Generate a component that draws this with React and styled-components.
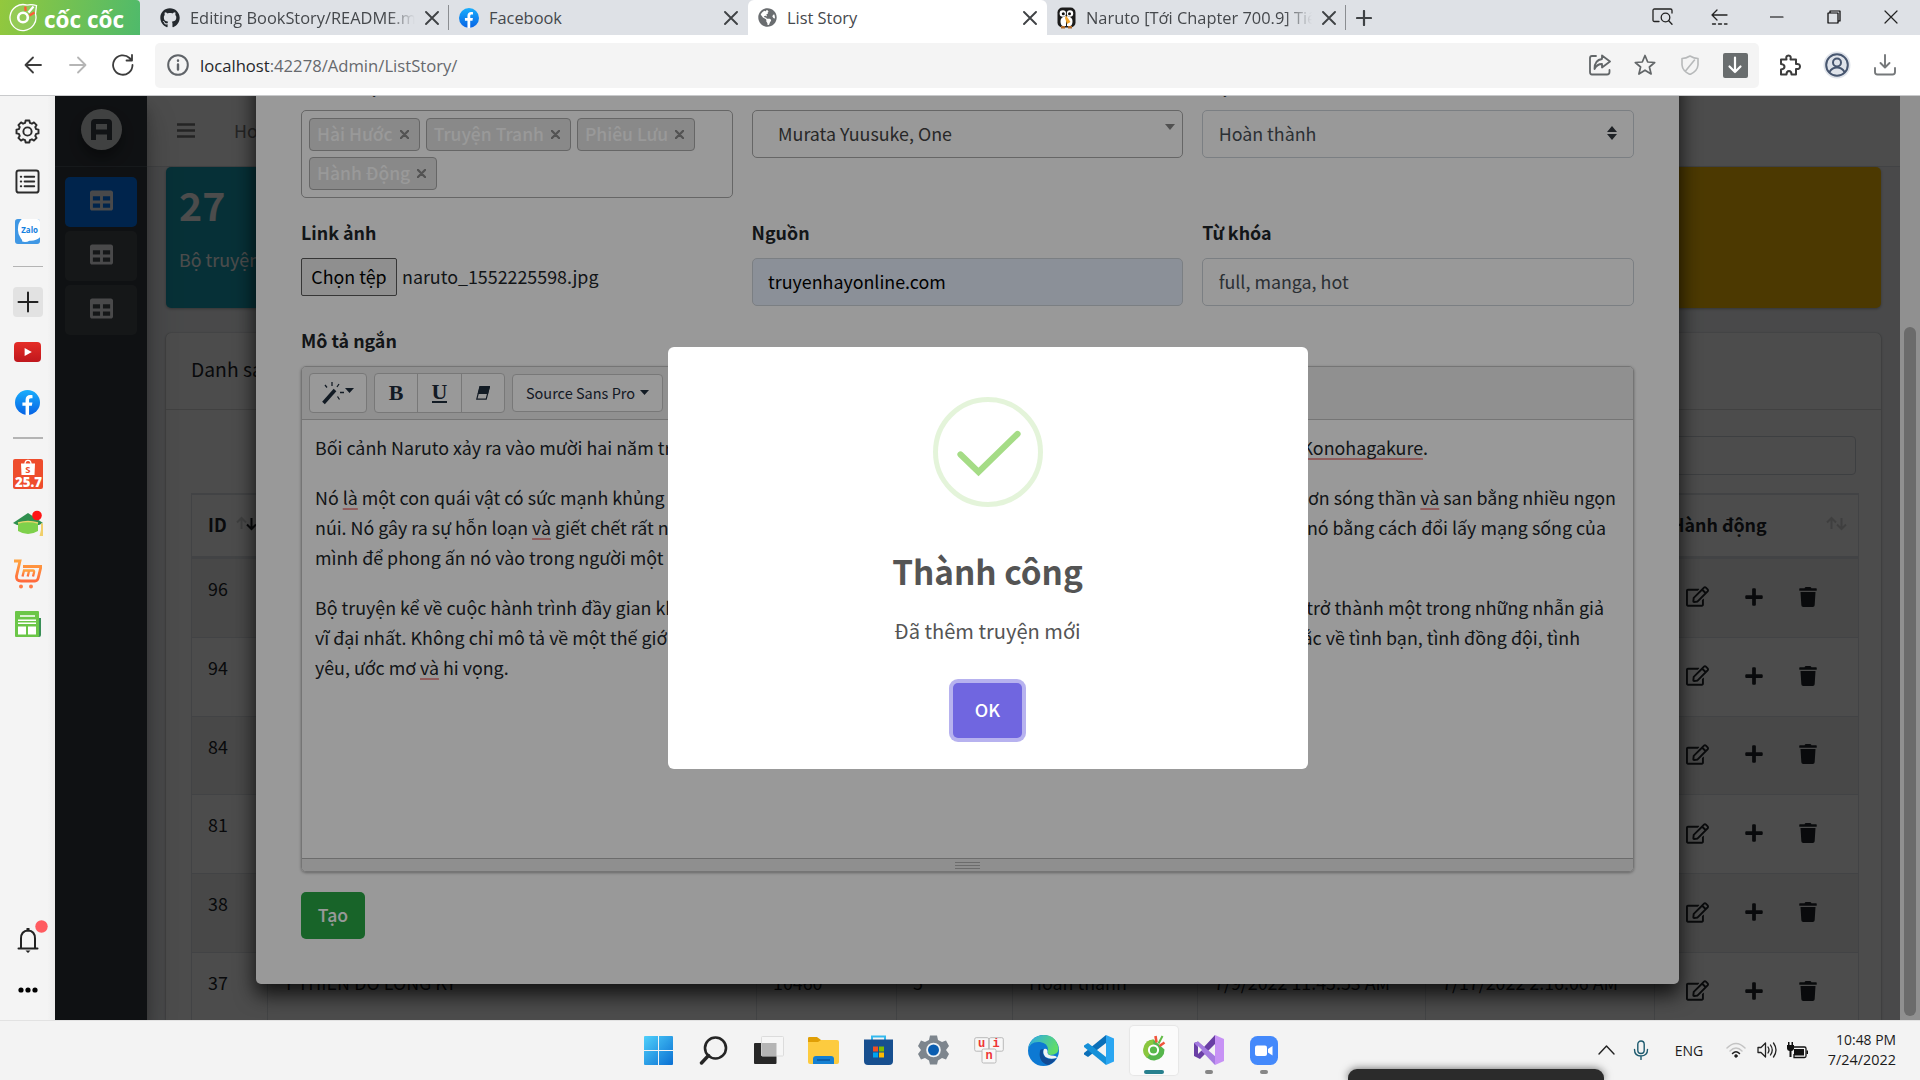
import React from 'react';
import styled, { createGlobalStyle, css } from 'styled-components';
import { FaTable, FaRegEdit, FaPlus, FaTrash, FaGithub, FaGlobeAmericas } from 'react-icons/fa';

const CONTENT_FONT = '"Noto Sans CJK SC", "Noto Sans", sans-serif';
const UI_FONT = '"Open Sans", "Noto Sans", sans-serif';

const GlobalStyle = createGlobalStyle`
  *, *::before, *::after { box-sizing: border-box; }
  body { margin: 0; overflow: hidden; }
  svg { display: block; flex: none; }
`;

const Screen = styled.div`
  width: 1920px;
  height: 1080px;
  display: flex;
  flex-direction: column;
  overflow: hidden;
  background: #fff;
  font-family: ${UI_FONT};
`;

/* ---------- browser chrome ---------- */
const TabStrip = styled.header`
  height: 35px;
  flex: none;
  display: flex;
  background: #dee1e6;
`;
const Brand = styled.div`
  width: 140px;
  display: flex;
  align-items: center;
  gap: 6px;
  padding-left: 9px;
  margin-right: 10px;
  border-top-right-radius: 4px;
  background: linear-gradient(100deg, #93c83d, #4fba6b);
  color: #fff;
  font-weight: 700;
  font-size: 22.5px;
  line-height: 31px;
  white-space: nowrap;
`;
const BrandName = styled.span`
  padding-top: 3px;
`;
const Tab = styled.div`
  width: 299px;
  display: flex;
  align-items: center;
  padding: 0 10px;
  border-radius: 6px 6px 0 0;
  background: ${p => (p.$active ? '#fff' : 'transparent')};
`;
const TabDivider = styled.i`
  width: 1px;
  height: 25px;
  align-self: center;
  margin-left: -1px;
  background: #8a8d91;
`;
const TabTitle = styled.span`
  flex: 1;
  min-width: 0;
  margin: 0 10px;
  overflow: hidden;
  white-space: nowrap;
  font-size: 16.4px;
  line-height: 35px;
  color: #45484c;
  ${p => p.$fade && css`mask-image: linear-gradient(90deg, #000 88%, transparent 100%);`}
`;
const NewTab = styled.div`
  width: 36px;
  display: flex;
  align-items: center;
  justify-content: center;
`;
const WindowButtons = styled.div`
  margin-left: auto;
  padding-right: 1px;
  display: flex;
`;
const WindowButton = styled.div`
  width: 57px;
  height: 33px;
  display: flex;
  align-items: center;
  justify-content: center;
`;
const Toolbar = styled.div`
  height: 61px;
  flex: none;
  display: flex;
  align-items: center;
  padding: 0 11px;
  border-bottom: 1px solid #c9cacc;
  background: #fff;
`;
const ToolButton = styled.div`
  width: ${p => p.$w}px;
  height: 45px;
  display: flex;
  align-items: center;
  justify-content: center;
`;
const AddressBar = styled.div`
  flex: 1;
  height: 45px;
  margin: 0 8px 0 10px;
  padding: 0 1px 0 12px;
  display: flex;
  align-items: center;
  border-radius: 5px;
  background: #f4f4f4;
`;
const Url = styled.span`
  flex: 1;
  margin-left: 11px;
  font-size: 16.65px;
  color: #66696d;
  b { font-weight: 400; color: #26282b; }
`;
const DownloadBadge = styled.div`
  width: 25px;
  height: 25px;
  border-radius: 2px;
  display: flex;
  align-items: center;
  justify-content: center;
  background: #696d6e;
`;

const Middle = styled.div`
  height: 924px;
  flex: none;
  display: flex;
`;
const BrowserSide = styled.aside`
  width: 55px;
  display: flex;
  flex-direction: column;
  align-items: center;
  padding-top: 10px;
  background: linear-gradient(90deg, #f4f4f4 86%, #ececec);
`;
const SideItem = styled.div`
  height: 50px;
  width: 55px;
  display: flex;
  align-items: center;
  justify-content: center;
  ${p => p.$bottom && css`margin-top: auto;`}
`;
const SideRule = styled.i`
  width: 30px;
  height: ${p => p.$h}px;
  margin: 10px 0;
  background: #b4b4b4;
`;
const AddBox = styled.div`
  width: 30px;
  height: 30px;
  border-radius: 4px;
  display: flex;
  align-items: center;
  justify-content: center;
  background: #e2e2e2;
`;
const MoreItem = styled(SideItem)`
  margin-bottom: 5px;
`;

/* ---------- admin page ---------- */
const Viewport = styled.main`
  width: 1865px;
  height: 924px;
  position: relative;
  display: flex;
  overflow: hidden;
  background: #f4f6f9;
  font-family: ${CONTENT_FONT};
  font-size: 17.85px;
  line-height: 30px;
  color: #212529;
`;
const AdminSide = styled.nav`
  width: 92px;
  z-index: 1;
  display: flex;
  flex-direction: column;
  background: #343a40;
  box-shadow: 0 17px 35px rgba(0,0,0,.25), 0 12px 12px rgba(0,0,0,.22);
`;
const LogoCell = styled.div`
  height: 71px;
  display: flex;
  justify-content: center;
  padding-top: 13px;
  border-bottom: 1px solid #4b545c;
  margin-bottom: 10px;
`;
const LogoDisc = styled.div`
  width: 41px;
  height: 41px;
  border-radius: 50%;
  background: #d9dadb;
  display: flex;
  align-items: center;
  justify-content: center;
  box-shadow: 0 8px 12px rgba(0,0,0,.35);
`;
const NavTile = styled.div`
  height: 50px;
  margin: 0 10px 4px;
  padding-bottom: 3px;
  border-radius: 5px;
  display: flex;
  align-items: center;
  justify-content: center;
  font-size: 23px;
  color: #f4f6f8;
  background: ${p => (p.$active ? '#007bff' : 'rgba(255,255,255,.1)')};
`;
const Content = styled.div`
  width: 1753px;
  display: flex;
  flex-direction: column;
`;
const TopNav = styled.div`
  height: 71px;
  flex: none;
  display: flex;
  align-items: center;
  gap: 39px;
  padding: 0 0 2px 30px;
  border-bottom: 1px solid #dee2e6;
  background: #fff;
  color: #7a7a7a;
`;
const BoxRow = styled.div`
  display: grid;
  grid-template-columns: repeat(4, 1fr);
  gap: 19px;
  height: 141px;
  flex: none;
  margin: 0 19px;
`;
const StatBox = styled.div`
  padding: 10px 13px;
  border-radius: 5px;
  background: ${p => p.$bg};
  color: #fff;
  box-shadow: 0 1px 3px rgba(0,0,0,.3);
`;
const StatNumber = styled.div`
  margin-top: 4px;
  font-size: 39.3px;
  font-weight: 700;
  line-height: 46px;
`;
const StatLabel = styled.div`
  margin-top: 17px;
`;
const ListCard = styled.section`
  flex: 1;
  min-height: 0;
  margin: 25px 19px 0;
  display: flex;
  flex-direction: column;
  border-radius: 5px 5px 0 0;
  background: #fff;
  box-shadow: 0 0 1px rgba(0,0,0,.3), 0 1px 3px rgba(0,0,0,.3);
`;
const CardHead = styled.div`
  height: 77px;
  flex: none;
  padding: 21px 25px;
  font-size: 19.3px;
  border-bottom: 1px solid rgba(0,0,0,.14);
`;
const SearchLine = styled.div`
  display: flex;
  justify-content: flex-end;
  padding: 26px 25px 18px 0;
`;
const SearchInput = styled.div`
  width: 250px;
  height: 39px;
  border: 1px solid #ced4da;
  border-radius: 4px;
`;
const Table = styled.div`
  margin: 0 22px 0 25px;
  border: 1px solid #dee2e6;
  border-top-width: 2px;
  display: flex;
  flex-direction: column;
`;
const TableRow = styled.div`
  display: grid;
  grid-template-columns: 76px 489px 140px 116px 185px 228px 229px 1fr;
  height: ${p => (p.$head ? 64 : 78.8)}px;
  flex: none;
  ${p => p.$head && css`
    font-weight: 700;
    border-bottom: 3px solid #dee2e6;
  `}
  background: ${p => (p.$odd ? 'rgba(0,0,0,.05)' : 'transparent')};
`;
const Cell = styled.div`
  display: flex;
  padding: 14px 10px 0 16px;
  border-right: 1px solid #dee2e6;
  border-bottom: 1px solid #dee2e6;
  white-space: nowrap;
  overflow: hidden;
  &:last-child { border-right: 0; }
`;
const HeadCell = styled(Cell)`
  border-bottom: 0;
  border-right: 0;
  justify-content: space-between;
  padding-right: 11px;
  overflow: visible;
`;
const RowActions = styled(Cell)`
  align-items: center;
  padding: 0 0 2px 31px;
`;
const ActionIcon = styled.span`
  width: ${p => p.$w}px;
`;

/* ---------- form modal ---------- */
const Backdrop = styled.div`
  position: absolute;
  inset: 0 20px 0 0;
  z-index: 2;
  background: rgba(0,0,0,.5);
`;
const FormModal = styled.div`
  position: absolute;
  z-index: 3;
  top: -27px;
  left: 201px;
  width: 1423px;
  height: 915px;
  padding: 0 45px;
  display: flex;
  flex-direction: column;
  border-radius: 5px;
  background: #fff;
  box-shadow: 0 10px 20px 1px rgba(0,0,0,.75);
`;
const FieldGrid = styled.div`
  display: grid;
  grid-template-columns: repeat(3, 1fr);
  gap: 19px 18.75px;
`;
const Label = styled.div`
  height: 30px;
  margin-bottom: 11px;
  font-weight: 700;
`;
const DescriptionLabel = styled(Label)`
  margin-top: 19px;
`;
const Field = styled.div`
  height: 48px;
  display: flex;
  align-items: center;
  justify-content: space-between;
  padding: 0 ${p => p.$pr || 15}px 2px ${p => p.$pl || 15.5}px;
  border: 1px solid ${p => p.$border || '#ced4da'};
  border-radius: 5px;
  background: ${p => p.$bg || '#fff'};
  color: ${p => p.$color || '#495057'};
`;
const TagBox = styled.div`
  height: 88px;
  padding: 7px;
  display: flex;
  flex-wrap: wrap;
  align-content: flex-start;
  gap: 6px;
  border: 1px solid #aaa;
  border-radius: 5px;
`;
const Tag = styled.span`
  height: 33px;
  display: flex;
  align-items: center;
  gap: 7px;
  padding: 0 10px 1px 7px;
  border: 1px solid #aaa;
  border-radius: 4px;
  background: #e4e4e4;
  color: #fff;
  font-weight: 500;
  font-size: 17.5px;
  white-space: nowrap;
`;
const FileLine = styled.div`
  display: flex;
  height: 38px;
  gap: 5px;
  line-height: 36px;
`;
const FileButton = styled.span`
  width: 96px;
  height: 38px;
  text-align: center;
  line-height: 34px;
  border: 1px solid #5a5a5a;
  border-radius: 2px;
  background: #efefef;
  color: #000;
`;
const Editor = styled.div`
  height: 506px;
  flex: none;
  display: flex;
  flex-direction: column;
  border: 1px solid #c4c4c4;
  border-radius: 5px;
  box-shadow: 0 1px 3px rgba(0,0,0,.35);
  overflow: hidden;
`;
const EditorTools = styled.div`
  height: 53px;
  flex: none;
  display: flex;
  align-items: center;
  gap: 7px;
  padding-left: 7px;
  background: #f1f1f1;
  border-bottom: 1px solid #c4c4c4;
`;
const ToolGroup = styled.div`
  display: flex;
  height: ${p => p.$h || 40}px;
  border: 1px solid #c8c8c8;
  border-radius: 4px;
  background: #fff;
  color: #1f2d3d;
`;
const EditorButton = styled.div`
  width: ${p => p.$w}px;
  display: flex;
  align-items: center;
  justify-content: center;
  gap: ${p => (p.$gap === undefined ? 5 : p.$gap)}px;
  padding-bottom: 1px;
  font-size: 14.5px;
  & + & { border-left: 1px solid #c8c8c8; }
`;
const CaretLift = styled.span`
  padding-bottom: 4px;
`;
const Glyph = styled.b`
  font-family: "Liberation Serif", serif;
  font-size: 22px;
  line-height: 22px;
  ${p => p.$under && css`border-bottom: 2px solid #1f2d3d; line-height: 18px;`}
`;
const EditorBody = styled.div`
  flex: 1;
  padding: 12px 13px 0;
`;
const Paragraph = styled.div`
  margin-bottom: 20px;
`;
const Line = styled.div`
  width: ${p => p.$w}px;
  height: 30px;
  display: flex;
  justify-content: space-between;
  white-space: nowrap;
`;
const Misspelt = styled.span`
  text-decoration: underline 2px #f09a9a;
  text-underline-offset: 3px;
  text-decoration-skip-ink: none;
`;
const StatusBar = styled.div`
  height: 13px;
  display: flex;
  flex-direction: column;
  align-items: center;
  justify-content: center;
  gap: 2px;
  border-top: 1px solid #b4b4b4;
  background: #efefef;
`;
const Grip = styled.i`
  width: 25px;
  height: 1px;
  background: #b4b4b4;
`;
const SubmitButton = styled.button`
  width: 64px;
  height: 47px;
  margin-top: 20px;
  padding: 0 0 3px 0;
  border: 0;
  border-radius: 5px;
  background: #28a745;
  color: #fff;
  font: 500 17.6px ${CONTENT_FONT};
`;

/* ---------- alert ---------- */
const Shade = styled.div`
  position: absolute;
  inset: 0;
  z-index: 4;
  background: rgba(0,0,0,.4);
`;
const Alert = styled.div`
  position: absolute;
  z-index: 5;
  left: 613px;
  top: 251px;
  width: 640px;
  height: 422px;
  padding: 50px 1px 0 0;
  display: flex;
  flex-direction: column;
  align-items: center;
  border-radius: 6px;
  background: #fff;
  color: #545454;
`;
const AlertTitle = styled.div`
  margin-top: 37px;
  font-size: 33.3px;
  font-weight: 700;
  line-height: 54px;
`;
const AlertText = styled.div`
  margin-top: 16px;
  font-size: 20.1px;
  line-height: 34px;
`;
const OkButton = styled.button`
  width: 69px;
  height: 55px;
  margin-top: 35px;
  padding: 0 0 3px;
  border: 0;
  border-radius: 5px;
  background: #7066e0;
  box-shadow: 0 0 0 4px rgba(112,102,224,.5);
  color: #fff;
  font: 500 17.85px ${CONTENT_FONT};
`;
const ScrollTrack = styled.div`
  width: 20px;
  padding: 231px 4px 4px;
  background: #f1f1f1;
`;
const ScrollThumb = styled.div`
  height: 100%;
  border-radius: 6px;
  background: #b2b2b2;
`;

/* ---------- taskbar ---------- */
const Taskbar = styled.footer`
  height: 60px;
  flex: none;
  display: flex;
  position: relative;
  padding-right: 24px;
  border-top: 1px solid #e2e2e2;
  background: #f3f3f3;
`;
const Apps = styled.div`
  display: flex;
  margin-left: 631px;
`;
const AppSlot = styled.div`
  width: 55px;
  height: 59px;
  position: relative;
  display: flex;
  align-items: center;
  justify-content: center;
  padding-bottom: 1px;
`;
const ActiveTile = styled.div`
  width: 48px;
  height: 49px;
  padding-bottom: 4px;
  display: flex;
  align-items: center;
  justify-content: center;
  border-radius: 4px;
  background: #fbfbfb;
  box-shadow: 0 0 1px 1px #e6e6e6;
`;
const Running = styled.i`
  position: absolute;
  bottom: 6px;
  width: ${p => (p.$active ? 20 : 8)}px;
  height: 4px;
  border-radius: 2px;
  background: ${p => (p.$active ? '#27808e' : '#868686')};
`;
const Tray = styled.div`
  margin-left: auto;
  padding-bottom: 1px;
  display: flex;
  align-items: center;
  color: #1b1b1b;
`;
const TrayItem = styled.div`
  width: ${p => p.$w}px;
  display: flex;
  justify-content: center;
  font-size: 14px;
`;
const Clock = styled.div`
  width: 84px;
  text-align: right;
  font-size: 14.4px;
  line-height: 20px;
  white-space: nowrap;
`;
const ClockTime = styled.div`
  font-size: 13.9px;
`;
const Preview = styled.div`
  position: absolute;
  left: 1348px;
  bottom: 0;
  width: 256px;
  height: 11px;
  border-radius: 9px 9px 0 0;
  background: #2b2b2b;
  box-shadow: 0 0 9px rgba(0,0,0,.6);
`;

/* ---------- drawings ---------- */
const Stroke = ({ w = 24, h = w, box = `0 0 ${w} ${h}`, c = '#3c3c3c', s = 1.8, children }) => (
  <svg width={w} height={h} viewBox={box} fill="none" stroke={c} strokeWidth={s} strokeLinecap="round" strokeLinejoin="round">{children}</svg>
);
const CloseX = ({ c = '#3f4245', s = 1.9, size = 14 }) => (
  <Stroke w={size} box="0 0 14 14" c={c} s={s}><path d="M1 1 13 13M13 1 1 13" /></Stroke>
);
const CocLogo = () => (
  <svg width="29" height="30" viewBox="0 0 29 30" fill="none">
    <path d="M18 2.200A13 13 0 1 0 26.500 11L27.500 2.500Q22 0.800 18 2.200" stroke="#fff" strokeWidth="1.300" fill="rgba(255,255,255,.1)" />
    <circle cx="14" cy="14.500" r="4.800" stroke="#fff" strokeWidth="2.600" />
    <path d="M16.300 3.500 16.600 8" stroke="#ff5a36" strokeWidth="2.300" />
    <path d="M24.500 3.500 19.500 9.500" stroke="#fff" strokeWidth="2.200" />
    <path d="M25.500 9.500 20.500 12.500" stroke="#ff5a36" strokeWidth="2.300" />
  </svg>
);
const CocSmall = () => (
  <svg width="24" height="30" viewBox="0 0 24 30" fill="none">
    <path d="M11.500 6.500A10.500 10.500 0 1 0 22.500 16.500Z" fill="#56b64c" />
    <path d="M11.500 6.500A10.500 10.500 0 0 0 5 25L11 17Z" fill="#8ac63f" />
    <circle cx="11.500" cy="17" r="4.600" fill="#58b84b" stroke="#fff" strokeWidth="2" />
    <path d="M13.500 3 14.500 9.500" stroke="#f0543c" strokeWidth="2.600" />
    <path d="M20.500 3 16.500 10.500" stroke="#62bb46" strokeWidth="2" />
    <path d="M22.500 9.500 17.500 13" stroke="#f0543c" strokeWidth="2.600" />
  </svg>
);
const FacebookMark = ({ size }) => (
  <svg width={size} height={size} viewBox="0 0 26 26">
    <defs><linearGradient id="fbg" x1="0" y1="0" x2="0" y2="1"><stop offset="0" stopColor="#19aefc" /><stop offset="1" stopColor="#0662e5" /></linearGradient></defs>
    <circle cx="13" cy="13" r="13" fill="url(#fbg)" />
    <path d="M11 26V16.500H7.700V13H11V10.200C11 7 13 5.200 15.800 5.200 17 5.200 18.200 5.400 18.200 5.400V8.500H16.600C15 8.500 14.600 9.400 14.600 10.400V13H18.100L17.500 16.500H14.600V26Z" fill="#fff" />
  </svg>
);
const Penguin = () => (
  <svg width="19" height="22" viewBox="0 0 19 22">
    <rect x=".5" y=".5" width="18" height="20" rx="5" fill="#1b1b1b" />
    <path d="M9 9Q3 10 3.500 15 4 19 6 19H9ZM10 9Q16 10 15.500 15 15 19 13 19H10Z" fill="#fff" />
    <circle cx="5.800" cy="6.500" r="3.200" fill="#fff" /><circle cx="13" cy="6.500" r="3.200" fill="#fff" />
    <circle cx="6.300" cy="6.800" r="1.500" fill="#111" /><circle cx="12.500" cy="6.800" r="1.500" fill="#111" />
    <path d="M9 8.500 13.500 15 10 17 8 11Z" fill="#f0a32c" /><path d="M4 19H8V21.500H4ZM11 19H15V21.500H11Z" fill="#b06a2a" />
  </svg>
);
const GearOutline = () => {
  const n = 8;
  let d = '';
  for (let i = 0; i < n; i += 1) {
    [[-0.27, 9.3], [-0.17, 11.6], [0.17, 11.6], [0.27, 9.3]].forEach(([o, r], k) => {
      const a = (i * 2 * Math.PI) / n + o;
      d += `${i === 0 && k === 0 ? 'M' : 'L'}${(13 + r * Math.sin(a)).toFixed(2)} ${(13 - r * Math.cos(a)).toFixed(2)}`;
    });
  }
  return <Stroke w={25} box="0 0 26 26" c="#2b2b2b" s={2}><path d={`${d}Z`} /><circle cx="13" cy="13" r="4.300" /></Stroke>;
};
const ListOutline = () => (
  <Stroke w={25} box="0 0 26 26" c="#2b2b2b" s={2}>
    <rect x="1.500" y="1.500" width="23" height="23" rx="2.500" />
    <path d="M6 8H6.500M10 8H20M6 13H6.500M10 13H20M6 18H6.500M10 18H20" />
  </Stroke>
);
const Zalo = () => (
  <svg width="25" height="25" viewBox="0 0 26 26">
    <rect width="26" height="26" rx="3" fill="#3f97e4" />
    <path d="M7 0H23Q26 0 26 3V19Q22 23 15 22.500 12 24.500 7.500 23.500 8 22 6 20 3 16 3 11 3 4 7 0Z" fill="#fff" />
    <text x="6.500" y="14.500" fontFamily="Open Sans, sans-serif" fontWeight="700" fontSize="8.300" fill="#1681e0">Zalo</text>
  </svg>
);
const YouTube = () => (
  <svg width="27" height="20" viewBox="0 0 28 20" preserveAspectRatio="none">
    <defs><linearGradient id="yt" x1="0" y1="0" x2="0" y2="1"><stop offset="0" stopColor="#e52d27" /><stop offset="1" stopColor="#bf171d" /></linearGradient></defs>
    <rect width="28" height="20" rx="4" fill="url(#yt)" /><path d="M11 6V14L18.500 10Z" fill="#fff" />
  </svg>
);
const Shopee = () => (
  <svg width="30" height="30" viewBox="0 0 30 30">
    <rect width="30" height="30" rx="2" fill="#ee4d2d" />
    <path d="M8 4.500H22L21.500 16H8.500Z" fill="#fff" /><path d="M12 5Q12 1.300 15 1.300T18 5" stroke="#fff" strokeWidth="1.300" fill="none" />
    <text x="12.200" y="13.700" fontFamily="Open Sans, sans-serif" fontWeight="700" fontSize="9.500" fill="#ee4d2d">S</text>
    <text x="2" y="27.500" fontFamily="Open Sans, sans-serif" fontWeight="800" fontSize="13.500" textLength="27" lengthAdjust="spacingAndGlyphs" fill="#fff">25.7</text>
  </svg>
);
const GradCap = () => (
  <svg width="30" height="28" viewBox="0 0 30 28">
    <path d="M0 13 15 3 30 13 26 15H4Z" fill="#2f8f4e" /><path d="M5 13Q15 10 25 13V21Q15 27 5 21Z" fill="#7ed04b" />
    <path d="M5 13Q15 10 25 13" stroke="#e9d66b" strokeWidth="1.500" fill="none" /><path d="M28 13V20L26.500 26H30V14Z" fill="#f0cf6a" />
    <circle cx="24" cy="5.500" r="4.800" fill="#ff1616" />
  </svg>
);
const Cart = () => (
  <svg width="28" height="30" viewBox="0 0 28 30" fill="none">
    <defs><linearGradient id="ct" x1="0" y1="0" x2="0" y2="1"><stop offset="0" stopColor="#ffa23f" /><stop offset="1" stopColor="#ff6a3c" /></linearGradient></defs>
    <path d="M0 2H6L2.500 17Q2 22 7 22H21Q23.500 22 24.200 19L27 7.500H9" stroke="url(#ct)" strokeWidth="2.800" />
    <path d="M8.500 17.500 10 11.500H19Q20.500 11.500 20 13.500L19 17.500M15 12 13.700 17.500" stroke="url(#ct)" strokeWidth="2.300" />
    <circle cx="7" cy="27.500" r="2" fill="#ff7a45" /><circle cx="17" cy="27.500" r="2" fill="#ff7a45" />
  </svg>
);
const News = () => (
  <svg width="26" height="26" viewBox="0 0 26 26">
    <path d="M22 7H26V24Q26 26 24 26H20Z" fill="#3a8f58" /><rect width="24" height="26" rx="1" fill="#6bc648" />
    <path d="M5 5H20M3 9.300H21M3 12.300H21" stroke="#fff" strokeWidth="1.500" /><path d="M3 15.500H11V23.500H3ZM13 15.500H21V23.500H13Z" fill="#fff" />
  </svg>
);
const Bell = () => (
  <svg width="40" height="40" viewBox="0 0 40 40" fill="none">
    <path d="M13 27.500V18.500Q13 11 20 10.500 27 11 27 18.500V27.500M10.500 28.500H29.500" stroke="#222" strokeWidth="2" strokeLinecap="round" />
    <path d="M18.500 8H21.500V11H18.500ZM17.500 30.500H22.500L20 33Z" fill="#222" /><circle cx="33.500" cy="6.500" r="6.200" fill="#ff5b60" />
  </svg>
);
const SortArrows = ({ up = '#d3d4d5', down = '#d3d4d5' }) => (
  <svg width="21" height="30" viewBox="0 0 21 30" fill="none" strokeWidth="2">
    <path d="M5.500 20V9.500M1 13.500 5.500 9 10 13.500" stroke={up} /><path d="M15.500 9V19.500M11 15.500 15.500 20 20 15.500" stroke={down} />
  </svg>
);
const Wand = () => (
  <svg width="22" height="24" viewBox="0 0 22 24" fill="none" stroke="#1f2d3d">
    <path d="M1.500 22 13 9" strokeWidth="3.600" /><path d="M10 1V5M3 4 5 6.500M17 3 15 6M18 11.500H22M15.500 15.500 17.500 18.500" strokeWidth="1.300" />
  </svg>
);
const Caret = () => <svg width="9" height="5"><path d="M0 0H9L4.500 5Z" fill="#1f2d3d" /></svg>;
const EraserMark = () => (
  <svg width="14" height="14" viewBox="0 0 14 14"><path d="M4 .5H13.500L10.200 13.200H.8Z" fill="none" stroke="#1f2d3d" strokeWidth="1.200" /><path d="M3.800 0H14L12 8H1.700Z" fill="#1f2d3d" /></svg>
);

/* ---------- taskbar app marks ---------- */
const WindowsMark = () => (
  <svg width="29" height="29" viewBox="0 0 29 29">
    <defs><linearGradient id="wn" x1="0" y1="0" x2="1" y2="1"><stop offset="0" stopColor="#4fd0fb" /><stop offset="1" stopColor="#0a6fd2" /></linearGradient></defs>
    <path d="M0 1Q0 0 1 0H14V14H0ZM15 0H28Q29 0 29 1V14H15ZM0 15H14V29H1Q0 29 0 28ZM15 15H29V28Q29 29 28 29H15Z" fill="url(#wn)" />
  </svg>
);
const SearchMark = () => <Stroke w={29} c="#252525" s={2.600}><circle cx="16.500" cy="12" r="10.500" /><path d="M9.500 19.500 2.500 27" strokeWidth="3.400" /></Stroke>;
const TaskView = () => (
  <svg width="30" height="28" viewBox="0 0 30 28"><rect y="7" width="22.500" height="21" rx="1" fill="#272727" /><rect x="7.500" y=".5" width="22" height="19.500" rx="1" fill="#f6f6f6" stroke="#dcdcdc" /><path d="M7.500 7H22.500V20H8.500Q7.500 20 7.500 19Z" fill="#b5b5b5" /></svg>
);
const Folder = () => (
  <svg width="31" height="28" viewBox="0 0 31 28"><path d="M0 2Q0 1 1.500 1H9L13 4V9H0Z" fill="#e09f06" /><path d="M0 6H10L13 4H29Q31 4 31 6V26Q31 28 29 28H2Q0 28 0 26Z" fill="#fdcb3f" /><path d="M5 28V23Q5 20 8 20H23Q26 20 26 23V28Z" fill="#1580d2" /><path d="M9 24H22" stroke="#0a569c" strokeWidth="1.500" /></svg>
);
const StoreMark = () => (
  <svg width="29" height="30" viewBox="0 0 29 30"><path d="M8 5V1.500H21V5" fill="none" stroke="#34b9ee" strokeWidth="2" /><path d="M0 4.500H29V26Q29 30 25 30H4Q0 30 0 26Z" fill="#174f8f" /><path d="M9 11.500H14V16.500H9Z" fill="#f25022" /><path d="M15 11.500H20V16.500H15Z" fill="#7fba00" /><path d="M9 17.500H14V22.500H9Z" fill="#00a4ef" /><path d="M15 17.500H20V22.500H15Z" fill="#ffb900" /></svg>
);
const GearMark = () => (
  <svg width="31" height="30" viewBox="0 0 31 30">
    <path d="M12 .5H19L20 5 24 7 28 5.500 31 11 28 15 31 19 28 24.500 24 23 20 25.500 19 29.500H12L11 25.500 7 23 3 24.500 0 19 3 15 0 11 3 5.500 7 7 11 5Z" fill="#7d858d" /><circle cx="15.500" cy="15" r="7.300" fill="#eef2f5" /><circle cx="15.500" cy="15" r="5.500" fill="#0a5db0" />
  </svg>
);
const UniKey = () => (
  <svg width="30" height="27" viewBox="0 0 30 27">
    <g fill="#f7f7f7" stroke="#b9b9b9"><rect x=".7" y=".7" width="14" height="13.500" rx="1.500" /><rect x="15.300" y=".7" width="14" height="13.500" rx="1.500" /><rect x="8" y="12" width="14" height="14" rx="1.500" /></g>
    <g fontFamily="Liberation Mono, monospace" fontWeight="700" fontSize="12" fill="#ee3636"><text x="4" y="9.500">u</text><text x="18.500" y="9.500">i</text><text x="11.500" y="22">n</text></g>
  </svg>
);
const EdgeMark = () => (
  <svg width="31" height="31" viewBox="0 0 31 31">
    <defs><linearGradient id="eg" x1="0" y1="0" x2="1" y2=".4"><stop offset="0" stopColor="#2aa8ee" /><stop offset="1" stopColor="#5fdc6a" /></linearGradient></defs>
    <circle cx="15.500" cy="15.500" r="15.500" fill="#0d79d3" />
    <path d="M0 15Q2 6 12 7 20 8 20 15 19 19 22 20 31 20 30.500 13 28 0 15.500 0 2 1 0 15Z" fill="url(#eg)" />
    <path d="M12 16Q10 27 20 30 26 28 28.500 23 22 26 17 22 14 19 15.500 14 12 14 12 16Z" fill="#114a94" /><path d="M16 14Q20 13 19.500 18 20 20 23 20.500 30 20.500 28.500 23 22 25 17.500 22 14 18 16 14Z" fill="#f3f3f3" />
  </svg>
);
const CodeMark = () => (
  <svg width="30" height="30" viewBox="0 0 30 30"><path d="M22 0V8L4 22 0 19.500V18Z" fill="#0b6fb8" /><path d="M22 30V22L4 8 0 10.500V12Z" fill="#1590d8" /><path d="M22 0 30 3.500V26.500L22 30Z" fill="#2aa6f2" /></svg>
);
const StudioMark = () => (
  <svg width="30" height="30" viewBox="0 0 30 30"><path d="M0 8 4 6.500 10 12 21 0 22 8 6 24 0 21Z" fill="#6a3fa5" /><path d="M4 6.500 22 22 21 30 0 8Z" fill="#a57ce0" /><path d="M4 11 8 15 4 19Z" fill="#f3f3f3" /><path d="M21 0 30 4V26L21 30Z" fill="#c792f5" /></svg>
);
const ZoomMark = () => (
  <svg width="28" height="29" viewBox="0 0 28 29"><rect width="28" height="29" rx="7.500" fill="#4489fb" /><rect x="5" y="9.500" width="12" height="10.500" rx="2" fill="#fff" /><path d="M18 13 22.500 10V19.500L18 16.500Z" fill="#fff" /></svg>
);

/* ---------- data ---------- */
const tabs = [
  { title: 'Editing BookStory/README.md', icon: <FaGithub size={20} color="#24292e" />, fade: true, rule: true },
  { title: 'Facebook', icon: <FacebookMark size={20} /> },
  { title: 'List Story', icon: <FaGlobeAmericas size={19} color="#6a6d70" />, active: true },
  { title: 'Naruto [Tới Chapter 700.9] Tiếng', icon: <Penguin />, fade: true, rule: true },
];
const genres = ['Hài Hước', 'Truyện Tranh', 'Phiêu Lưu', 'Hành Động'];
const ids = [96, 94, 84, 81, 38];
const lastRow = ['37', 'Ỷ THIÊN ĐỒ LONG KÝ', '10460', '5', 'Hoàn thành', '7/9/2022 11:45:53 AM', '7/17/2022 2:16:06 AM'];
const apps = [WindowsMark, SearchMark, TaskView, Folder, StoreMark, GearMark, UniKey, EdgeMark, CodeMark];

function Actions() {
  return (
    <RowActions>
      <ActionIcon $w={58}><FaRegEdit size={23} /></ActionIcon>
      <ActionIcon $w={54}><FaPlus size={20} /></ActionIcon>
      <ActionIcon $w={20}><FaTrash size={20} /></ActionIcon>
    </RowActions>
  );
}

function BrowserChrome() {
  return (
    <>
      <TabStrip>
        <Brand><CocLogo /><BrandName>cốc cốc</BrandName></Brand>
        {tabs.map(t => (
          <React.Fragment key={t.title}>
            <Tab $active={t.active}>{t.icon}<TabTitle $fade={t.fade}>{t.title}</TabTitle><CloseX /></Tab>
            {t.rule && <TabDivider />}
          </React.Fragment>
        ))}
        <NewTab><Stroke w={16} c="#3f4245" s={2.200}><path d="M8 1V15M1 8H15" /></Stroke></NewTab>
        <WindowButtons>
          <WindowButton><Stroke w={21} h={17} c="#222" s={1.300}><path d="M7 13.500H2.500Q1 13.500 1 12V2.500Q1 1 2.500 1H18.500Q20 1 20 2.500V5" /><circle cx="13.500" cy="9.500" r="4.300" /><path d="M16.500 12.500 20 16.300" /></Stroke></WindowButton>
          <WindowButton><Stroke w={17} h={16} c="#222" s={1.300}><path d="M16 6H1M6 1 1 6 6 11" /><path d="M1.500 15H16" strokeDasharray="3 3" /></Stroke></WindowButton>
          <WindowButton><Stroke w={14} h={2} c="#000" s={1.200}><path d="M.5 1H13" /></Stroke></WindowButton>
          <WindowButton><Stroke w={14} c="#000" s={1.200}><path d="M1 3H11V13H1ZM3 3V1H13V11H11" /></Stroke></WindowButton>
          <WindowButton><CloseX c="#222" s={1.200} /></WindowButton>
        </WindowButtons>
      </TabStrip>
      <Toolbar>
        <ToolButton $w={44.5}><Stroke w={18} c="#3c3c3c"><path d="M17 9H1.500M9 1.500 1.500 9 9 16.500" /></Stroke></ToolButton>
        <ToolButton $w={44.5}><Stroke w={18} c="#b5b5b5"><path d="M1 9H16.500M9 1.500 16.500 9 9 16.500" /></Stroke></ToolButton>
        <ToolButton $w={45}><Stroke w={22} c="#3c3c3c"><path d="M20.500 11A9.700 9.700 0 1 1 17.500 4L19.500 6M20 1V6.500H14.500" /></Stroke></ToolButton>
        <AddressBar>
          <Stroke w={22} c="#5f6368" s={2}><circle cx="11" cy="11" r="9.800" /><path d="M11 10.500V15.500M11 6.500V6.700" strokeWidth="2.400" /></Stroke>
          <Url><b>localhost</b>:42278/Admin/ListStory/</Url>
          <ToolButton $w={45}><Stroke w={22} c="#626668"><path d="M7 2H3Q1 2 1 4V18Q1 20.500 3 20.500H18Q20.500 20.500 20.500 18V16" /><path d="M13 1.500 21 7.500 13 13.500V10Q8 10 5.500 15 5.500 6 13 5Z" /></Stroke></ToolButton>
          <ToolButton $w={45}><Stroke w={22} c="#626668" s={1.700}><path d="M11 1.500 13.700 8 20.700 8.500 15.400 13 17.100 20 11 16.200 4.900 20 6.600 13 1.300 8.500 8.300 8Z" /></Stroke></ToolButton>
          <ToolButton $w={45}><Stroke w={20} c="#b7b9ba" s={1.600}><path d="M10 1Q14 3.500 18 3.500V10Q17.500 16 10 19.500 2.500 16 2 10V3.500Q6 3.500 10 1ZM5.500 16 14.500 5" /></Stroke></ToolButton>
          <ToolButton $w={45}><DownloadBadge><Stroke w={16} h={18} c="#fff" s={2.200}><path d="M8 1.500V16M2.500 10.500 8 16 13.500 10.500" /></Stroke></DownloadBadge></ToolButton>
        </AddressBar>
        <ToolButton $w={47.5}><Stroke w={22} c="#3c3c3c" s={2}><path d="M2 5.500H7.500Q6.500 1.500 9.500 1.500T11.500 5.500H17V10Q21 9.500 21 12.500T17 15V20.500H12.500Q12.500 17 10 17T7.500 20.500H2V15.500Q5.500 15 5.500 12.700T2 10Z" /></Stroke></ToolButton>
        <ToolButton $w={46}><Stroke w={28} c="#47566f" s={2}><circle cx="14" cy="14" r="13.500" fill="#dfe3ea" stroke="none" /><circle cx="14" cy="14" r="10.800" /><circle cx="14" cy="11.500" r="4" /><path d="M6.500 21Q9 16.500 14 16.500T21.500 21" /></Stroke></ToolButton>
        <ToolButton $w={49}><Stroke w={22} c="#75787a" s={1.900}><path d="M11 1V13M6.500 9 11 13.500 15.500 9M1 14V18Q1 20.500 3.500 20.500H18.500Q21 20.500 21 18V14" /></Stroke></ToolButton>
      </Toolbar>
    </>
  );
}

function BrowserSidebar() {
  return (
    <BrowserSide>
      <SideItem><GearOutline /></SideItem>
      <SideItem><ListOutline /></SideItem>
      <SideItem><Zalo /></SideItem>
      <SideRule $h={1} />
      <SideItem><AddBox><Stroke w={22} c="#222" s={2}><path d="M11 1.500V20.500M1.500 11H20.500" /></Stroke></AddBox></SideItem>
      <SideItem><YouTube /></SideItem>
      <SideItem><FacebookMark size={25} /></SideItem>
      <SideRule $h={2} />
      <SideItem><Shopee /></SideItem>
      <SideItem><GradCap /></SideItem>
      <SideItem><Cart /></SideItem>
      <SideItem><News /></SideItem>
      <SideItem $bottom><Bell /></SideItem>
      <MoreItem><svg width="20" height="6"><circle cx="3" cy="3" r="2.600" /><circle cx="10" cy="3" r="2.600" /><circle cx="17" cy="3" r="2.600" /></svg></MoreItem>
    </BrowserSide>
  );
}

function AdminPage() {
  return (
    <>
      <AdminSide>
        <LogoCell><LogoDisc><Stroke w={23} c="#3b4046" s={5}><path d="M3.500 22V5Q3.500 3.500 5 3.500H18Q19.500 3.500 19.500 5V22M4 14H19" strokeLinecap="butt" /></Stroke></LogoDisc></LogoCell>
        <NavTile $active><FaTable /></NavTile>
        <NavTile><FaTable /></NavTile>
        <NavTile><FaTable /></NavTile>
      </AdminSide>
      <Content>
        <TopNav><svg width="18" height="15"><path d="M0 1.500H18M0 7.500H18M0 13.500H18" stroke="#7a7a7a" strokeWidth="2.400" /></svg>Home</TopNav>
        <BoxRow>
          <StatBox $bg="#17a2b8"><StatNumber>27</StatNumber><StatLabel>Bộ truyện</StatLabel></StatBox>
          <StatBox $bg="#28a745" />
          <StatBox $bg="#dc3545" />
          <StatBox $bg="#ffc107" />
        </BoxRow>
        <ListCard>
          <CardHead>Danh sách truyện</CardHead>
          <SearchLine><SearchInput /></SearchLine>
          <Table>
            <TableRow $head>
              <HeadCell>ID<SortArrows down="#212529" /></HeadCell>
              <HeadCell /><HeadCell /><HeadCell /><HeadCell /><HeadCell /><HeadCell />
              <HeadCell>Hành động<SortArrows /></HeadCell>
            </TableRow>
            {ids.map((id, i) => (
              <TableRow key={id} $odd={i % 2 === 0}>
                <Cell>{id}</Cell><Cell /><Cell /><Cell /><Cell /><Cell /><Cell /><Actions />
              </TableRow>
            ))}
            <TableRow>
              {lastRow.map(text => <Cell key={text}>{text}</Cell>)}
              <Actions />
            </TableRow>
          </Table>
        </ListCard>
      </Content>
    </>
  );
}

function StoryFields() {
  return (
    <FieldGrid>
      <div>
        <Label>Danh mục</Label>
        <TagBox>{genres.map(name => <Tag key={name}>{name}<CloseX c="#8a8a8a" s={3.400} size={9} /></Tag>)}</TagBox>
      </div>
      <div>
        <Label>Tác giả</Label>
        <Field $border="#aaa" $pl={25.5} $pr={7} $color="#444">Murata Yuusuke, One<svg width="10" height="20"><path d="M0 1H10L5 7Z" fill="#888" /></svg></Field>
      </div>
      <div>
        <Label>Trạng thái</Label>
        <Field>Hoàn thành<svg width="12" height="14"><path d="M1 6 6 0 11 6ZM1 8H11L6 14Z" fill="#343a40" /></svg></Field>
      </div>
      <div><Label>Link ảnh</Label><FileLine><FileButton>Chọn tệp</FileButton>naruto_1552225598.jpg</FileLine></div>
      <div><Label>Nguồn</Label><Field $bg="#e8f0fe" $color="#000">truyenhayonline.com</Field></div>
      <div><Label>Từ khóa</Label><Field>full, manga, hot</Field></div>
    </FieldGrid>
  );
}

function DescriptionEditor() {
  return (
    <Editor>
      <EditorTools>
        <ToolGroup><EditorButton $w={56} $gap={1}><Wand /><CaretLift><Caret /></CaretLift></EditorButton></ToolGroup>
        <ToolGroup>
          <EditorButton $w={42}><Glyph>B</Glyph></EditorButton>
          <EditorButton $w={44}><Glyph $under>U</Glyph></EditorButton>
          <EditorButton $w={43}><EraserMark /></EditorButton>
        </ToolGroup>
        <ToolGroup $h={38}><EditorButton $w={149}>Source Sans Pro<Caret /></EditorButton></ToolGroup>
      </EditorTools>
      <EditorBody>
        <Paragraph>
          <Line $w={1113}><span>Bối cảnh Naruto xảy ra vào mười hai năm trước</span><span>làng <Misspelt>Konohagakure</Misspelt>.</span></Line>
        </Paragraph>
        <Paragraph>
          <Line $w={1301}><span>Nó <Misspelt>là</Misspelt> một con quái vật có sức mạnh khủng khiếp</span><span>cơn sóng thần <Misspelt>và</Misspelt> san bằng nhiều ngọn</span></Line>
          <Line $w={1291}><span>núi. Nó gây ra sự hỗn loạn <Misspelt>và</Misspelt> giết chết rất nhiều</span><span>nó bằng cách đổi lấy mạng sống của</span></Line>
          <Line>mình để phong ấn nó vào trong người một</Line>
        </Paragraph>
        <Paragraph>
          <Line $w={1289}><span>Bộ truyện kể về cuộc hành trình đầy gian khổ</span><span>trở thành một trong những nhẫn giả</span></Line>
          <Line $w={1265}><span>vĩ đại nhất. Không chỉ mô tả về một thế giới</span><span>sắc về tình bạn, tình đồng đội, tình</span></Line>
          <Line><span>yêu, ước mơ <Misspelt>và</Misspelt> hi vọng.</span></Line>
        </Paragraph>
      </EditorBody>
      <StatusBar><Grip /><Grip /><Grip /></StatusBar>
    </Editor>
  );
}

function StoryModal() {
  return (
    <FormModal>
      <StoryFields />
      <DescriptionLabel>Mô tả ngắn</DescriptionLabel>
      <DescriptionEditor />
      <SubmitButton>Tạo</SubmitButton>
    </FormModal>
  );
}

function SuccessAlert() {
  return (
    <Alert>
      <svg width="110" height="110" viewBox="0 0 110 110" fill="none">
        <circle cx="55" cy="55" r="52.500" stroke="#a5dc86" strokeOpacity=".3" strokeWidth="5" />
        <path d="M27.500 57.500 45.500 75 84.500 37" stroke="#a5dc86" strokeWidth="6.200" strokeLinecap="round" />
      </svg>
      <AlertTitle>Thành công</AlertTitle>
      <AlertText>Đã thêm truyện mới</AlertText>
      <OkButton>OK</OkButton>
    </Alert>
  );
}

function WindowsTaskbar() {
  return (
    <Taskbar>
      <Apps>
        {apps.map((Mark, i) => <AppSlot key={i}><Mark /></AppSlot>)}
        <AppSlot><ActiveTile><CocSmall /></ActiveTile><Running $active /></AppSlot>
        <AppSlot><StudioMark /><Running /></AppSlot>
        <AppSlot><ZoomMark /><Running /></AppSlot>
      </Apps>
      <Tray>
        <TrayItem $w={36}><Stroke w={17} h={10} c="#222" s={1.400}><path d="M1 9 8.500 1 16 9" /></Stroke></TrayItem>
        <TrayItem $w={34}><Stroke w={16} h={20} c="#1c5a6e" s={1.400}><rect x="4.800" y="1" width="6.400" height="12.500" rx="3.200" /><path d="M1.500 9.500Q1.500 16 8 16T14.500 9.500M8 16V19.500" /></Stroke></TrayItem>
        <TrayItem $w={62}>ENG</TrayItem>
        <TrayItem $w={32}><Stroke w={20} h={16} c="#c4c4c4" s={1.500}><path d="M1 6Q10-3 19 6" /><path d="M4 9Q10 3 16 9" /><path d="M6.500 11.500Q10 8 13.500 11.500" stroke="#222" /><circle cx="10" cy="14" r="1.400" fill="#222" stroke="#222" strokeWidth=".6" /></Stroke></TrayItem>
        <TrayItem $w={30}><Stroke w={20} h={18} c="#222" s={1.300}><path d="M1 6.500H4L8.500 2V16L4 11.500H1ZM11 6Q13 9 11 12M13.500 4Q17 9 13.500 14M16.500 2Q21.500 9 16.500 16" /></Stroke></TrayItem>
        <TrayItem $w={30}><svg width="21" height="17" viewBox="0 0 21 17"><path d="M5 5H17.500Q19 5 19 6.500V14Q19 15.500 17.500 15.500H7V12" fill="none" stroke="#111" strokeWidth="1.300" /><rect x="7" y="7" width="10" height="6.500" fill="#111" /><path d="M0 3H7V7Q6 9 4.500 9V15H2.500V9Q0 8.500 0 6.500ZM1 0H2.500V3H1ZM4.500 0H6V3H4.500ZM19.500 8.500H21V12H19.500Z" fill="#111" /></svg></TrayItem>
        <Clock><ClockTime>10:48 PM</ClockTime>7/24/2022</Clock>
      </Tray>
      <Preview />
    </Taskbar>
  );
}

export default function App() {
  return (
    <Screen>
      <GlobalStyle />
      <BrowserChrome />
      <Middle>
        <BrowserSidebar />
        <Viewport>
          <AdminPage />
          <ScrollTrack><ScrollThumb /></ScrollTrack>
          <Backdrop />
          <StoryModal />
          <Shade />
          <SuccessAlert />
        </Viewport>
      </Middle>
      <WindowsTaskbar />
    </Screen>
  );
}
